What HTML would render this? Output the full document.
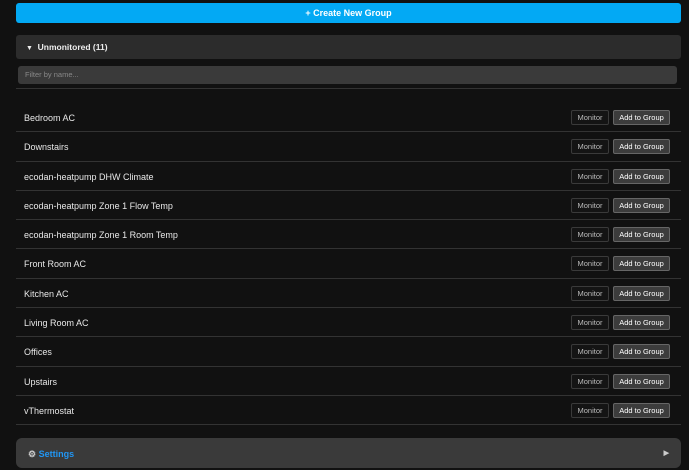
<!DOCTYPE html>
<html><head><style>
body{margin:0;background:#111;font-family:"Liberation Sans",sans-serif;width:689px;height:456px;overflow:hidden;position:relative;color:#e8e8e8}
.create{position:absolute;left:16px;top:3px;width:665px;height:20px;background:#03a9f4;border-radius:3px;color:#fff;font-size:9px;font-weight:bold;text-align:center;line-height:20px}
.hdr{position:absolute;left:16px;top:35px;width:665px;height:24px;background:#2c2c2c;border-radius:3px;font-size:8.5px;font-weight:bold;line-height:24px;color:#eee}
.hdr span{margin-left:10px;font-size:7px}
.filter{position:absolute;left:18px;top:66px;width:659px;height:18px;background:#3a3a3a;border-radius:3px;font-size:7.5px;color:#888;line-height:18px;box-sizing:border-box;padding-left:7px}
.line{position:absolute;left:16px;top:88px;width:665px;height:1px;background:#333}
.rows{position:absolute;left:16px;top:103px;width:665px}
.row{height:28.3px;border-bottom:1px solid #333;position:relative;font-size:9px;line-height:30px}
.row .n{position:absolute;left:8px}
.b{position:absolute;top:7px;height:15px;box-sizing:border-box;border-radius:2px;font-size:7.5px;line-height:13px;text-align:center}
.m{left:555px;width:38px;border:1px solid #3a3a3a;background:#141414;color:#bbb}
.a{left:597px;width:57px;border:1px solid #666;background:#3c3c3c;color:#fff}
.set{position:absolute;left:16px;top:438px;width:665px;height:30px;background:#3a3a3a;border-radius:6px;font-size:9px;font-weight:bold;color:#2196f3;line-height:32px}
</style></head><body>
<div class="create">+ Create New Group</div>
<div class="hdr"><span>▼</span>&nbsp;&nbsp;Unmonitored (11)</div>
<div class="filter">Filter by name...</div>
<div class="line"></div>
<div class="rows">
<div class="row"><span class="n">Bedroom AC</span><div class="b m">Monitor</div><div class="b a">Add to Group</div></div>
<div class="row"><span class="n">Downstairs</span><div class="b m">Monitor</div><div class="b a">Add to Group</div></div>
<div class="row"><span class="n">ecodan-heatpump DHW Climate</span><div class="b m">Monitor</div><div class="b a">Add to Group</div></div>
<div class="row"><span class="n">ecodan-heatpump Zone 1 Flow Temp</span><div class="b m">Monitor</div><div class="b a">Add to Group</div></div>
<div class="row"><span class="n">ecodan-heatpump Zone 1 Room Temp</span><div class="b m">Monitor</div><div class="b a">Add to Group</div></div>
<div class="row"><span class="n">Front Room AC</span><div class="b m">Monitor</div><div class="b a">Add to Group</div></div>
<div class="row"><span class="n">Kitchen AC</span><div class="b m">Monitor</div><div class="b a">Add to Group</div></div>
<div class="row"><span class="n">Living Room AC</span><div class="b m">Monitor</div><div class="b a">Add to Group</div></div>
<div class="row"><span class="n">Offices</span><div class="b m">Monitor</div><div class="b a">Add to Group</div></div>
<div class="row"><span class="n">Upstairs</span><div class="b m">Monitor</div><div class="b a">Add to Group</div></div>
<div class="row"><span class="n">vThermostat</span><div class="b m">Monitor</div><div class="b a">Add to Group</div></div>
</div>
<div class="set"><span style="color:#ccc;margin-left:12px">⚙</span> Settings<span style="position:absolute;right:12px;color:#ccc;font-size:7px">▶</span></div>
</body></html>
